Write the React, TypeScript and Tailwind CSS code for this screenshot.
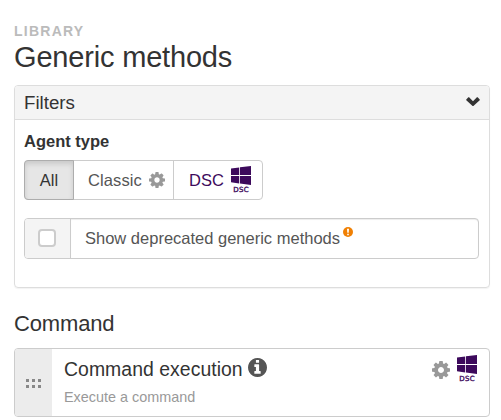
import React from "react";

const COG =
  "M1152 896q0-106-75-181t-181-75-181 75-75 181 75 181 181 75 181-75 75-181zm512-109v222q0 12-8 23t-20 13l-185 28q-19 54-39 91 35 50 107 138 10 12 10 25t-9 23q-27 37-99 108t-94 71q-12 0-26-9l-138-108q-44 23-91 38-16 136-29 186-7 28-36 28h-222q-14 0-24.5-8.5t-11.5-21.5l-28-184q-49-16-90-37l-141 107q-10 9-25 9-14 0-25-11-126-114-165-168-7-10-7-23 0-12 8-23 15-21 51-66.5t54-70.5q-27-50-41-99l-183-27q-13-2-21-12.5t-8-23.5v-222q0-12 8-23t19-13l186-28q14-46 39-92-40-57-107-138-10-12-10-24 0-10 9-23 26-36 98.5-107.5t94.5-71.5q13 0 26 10l138 107q44-23 91-38 16-136 29-186 7-28 36-28h222q14 0 24.5 8.5t11.5 21.5l28 184q49 16 90 37l142-107q9-9 24-9 13 0 25 10 129 119 165 170 7 8 7 22 0 12-8 23-15 21-51 66.5t-54 70.5q26 50 41 98l183 28q13 2 21 12.5t8 23.5z";
const INFO =
  "M1152 1376v-160q0-14-9-23t-23-9h-96v-512q0-14-9-23t-23-9h-320q-14 0-23 9t-9 23v160q0 14 9 23t23 9h96v320h-96q-14 0-23 9t-9 23v160q0 14 9 23t23 9h448q14 0 23-9t9-23zm-128-896v-160q0-14-9-23t-23-9h-192q-14 0-23 9t-9 23v160q0 14 9 23t23 9h192q14 0 23-9t9-23zm640 416q0 209-103 385.5t-279.5 279.5-385.5 103-385.5-103-279.5-279.5-103-385.5 103-385.5 279.5-279.5 385.5-103 385.5 103 279.5 279.5 103 385.5z";

function Cog({ className = "" }: { className?: string }) {
  return (
    <svg viewBox="128 128 1536 1536" className={`shrink-0 fill-[#999] ${className}`}>
      <path d={COG} />
    </svg>
  );
}

function DscLogo({ className = "" }: { className?: string }) {
  return (
    <span className={`flex w-5 shrink-0 flex-col items-center ${className}`}>
      <svg viewBox="0 0 20 19" className="h-[19px] w-5 fill-[#3d0a5c]">
        <path d="M0 2.6 8.2 1.5V9.1H0zM9 1.3 20 0v9.1H9zM0 9.9h8.2v7.5L0 16.3zM9 9.9h11V19L9 17.6z" />
      </svg>
      <span className="mt-[2px] -mr-[0.3px] font-['DejaVu_Sans',sans-serif] text-[7px] leading-[7px] tracking-[0.4px] text-[#3d0a5c] [-webkit-text-stroke:0.35px_#3d0a5c]">
        DSC
      </span>
    </span>
  );
}

export default function App() {
  return (
    <div className="h-[420px] w-[501px] overflow-hidden bg-white pl-3.5 font-['Liberation_Sans',Arial,sans-serif] text-[#333]">
      <div className="pt-[23px] text-sm leading-4 font-bold tracking-[1.25px] text-[#bbb]">LIBRARY</div>
      <h1 className="text-[29px] leading-9 tracking-[-0.18px]">Generic methods</h1>

      <section className="mt-2.5 h-[203px] w-[476px] rounded border border-[#ddd] shadow-[0_1px_1px_rgba(0,0,0,0.05)]">
        <header className="flex h-[34px] items-center justify-between rounded-t-[3px] border-b border-[#ddd] bg-[#f4f4f4] pr-[9px] pl-[9px]">
          <h2 className="text-[18.7px] leading-5">Filters</h2>
          <svg viewBox="0 0 14 9" className="mb-[2px] h-[9px] w-[14px] fill-[#333]">
            <path d="M.3 2.4 2.3.3Q2.7 0 3.1.3L7 4.2 10.9.3Q11.3 0 11.7.3l2 2.1q.4.4 0 .8L7.4 8.9q-.4.3-.8 0L.3 3.2q-.4-.4 0-.8z" />
          </svg>
        </header>
        <div className="pt-[11px] pr-2.5 pl-[9px]">
          <div className="text-[16.5px] leading-5 font-bold">Agent type</div>
          <div className="mt-[9px] flex h-10 w-[239px] rounded border border-[#ccc] text-[16.5px]">
            <button className="-my-px -ml-px flex w-[50px] items-center justify-center rounded-l border border-[#adadad] bg-[#e6e6e6] pt-px shadow-[inset_0_3px_5px_rgba(0,0,0,0.125)]">
              All
            </button>
            <button className="flex w-[100px] items-center border-r border-[#ccc] pl-3.5 text-[#555]">
              <span className="w-[54px] pt-px text-left tracking-[0.1px]">Classic</span>
              <Cog className="ml-[7px] size-4" />
            </button>
            <button className="flex items-center pl-[15px] text-[#3d0a5c]">
              <span className="w-[35px] pt-px text-left">DSC</span>
              <DscLogo className="ml-[7px]" />
            </button>
          </div>
          <label className="mt-[18px] flex h-[41px] w-[455px] rounded border border-[#ccc]">
            <span className="flex w-[46px] items-center justify-center rounded-l-[3px] border-r border-[#ccc] bg-[#f4f4f4] pr-px pb-px">
              <span className="size-[18px] rounded-[4px] border-2 border-[#ccc] bg-white" />
            </span>
            <span className="flex flex-1 items-center rounded-r-[3px] pl-3.5 text-[16.5px] text-[#555] shadow-[inset_0_1px_1px_rgba(0,0,0,0.075)]">
              Show deprecated generic methods
              <svg viewBox="0 0 10 10" className="mb-3.5 ml-[3px] size-2.5">
                <circle cx="5" cy="5" r="5" fill="#f08004" />
                <path d="M4 1.7h2L5.7 5.8H4.3zM4.2 6.7h1.6v1.5H4.2z" fill="#fff" />
              </svg>
            </span>
          </label>
        </div>
      </section>

      <h2 className="mt-[21px] text-[22px] leading-[30px] tracking-[-0.15px]">Command</h2>
      <article className="mt-[9px] flex h-[69px] w-[476px] overflow-hidden rounded border border-[#ccc]">
        <div className="flex w-[37px] items-center justify-center bg-[#ececec]">
          <svg viewBox="0 0 15 9" className="mt-px h-[9px] w-[15px] fill-[#888]">
            <path d="M0 0h3v3H0zM6 0h3v3H6zM12 0h3v3h-3zM0 6h3v3H0zM6 6h3v3H6zM12 6h3v3h-3z" />
          </svg>
        </div>
        <div className="flex-1 pt-[9px] pl-3">
          <div className="flex h-[22px] items-center text-[19.4px] leading-[22px] tracking-[0.05px]">
            Command execution
            <svg viewBox="128 128 1536 1536" className="mb-[3px] ml-[5px] size-[19px] fill-[#555]">
              <path d={INFO} />
            </svg>
          </div>
          <div className="mt-[7px] text-[14.4px] leading-5 text-[#999]">Execute a command</div>
        </div>
        <div className="flex items-start pt-1.5 pr-3">
          <Cog className="mt-[6px] mr-[7px] size-[18px]" />
          <DscLogo />
        </div>
      </article>
    </div>
  );
}
